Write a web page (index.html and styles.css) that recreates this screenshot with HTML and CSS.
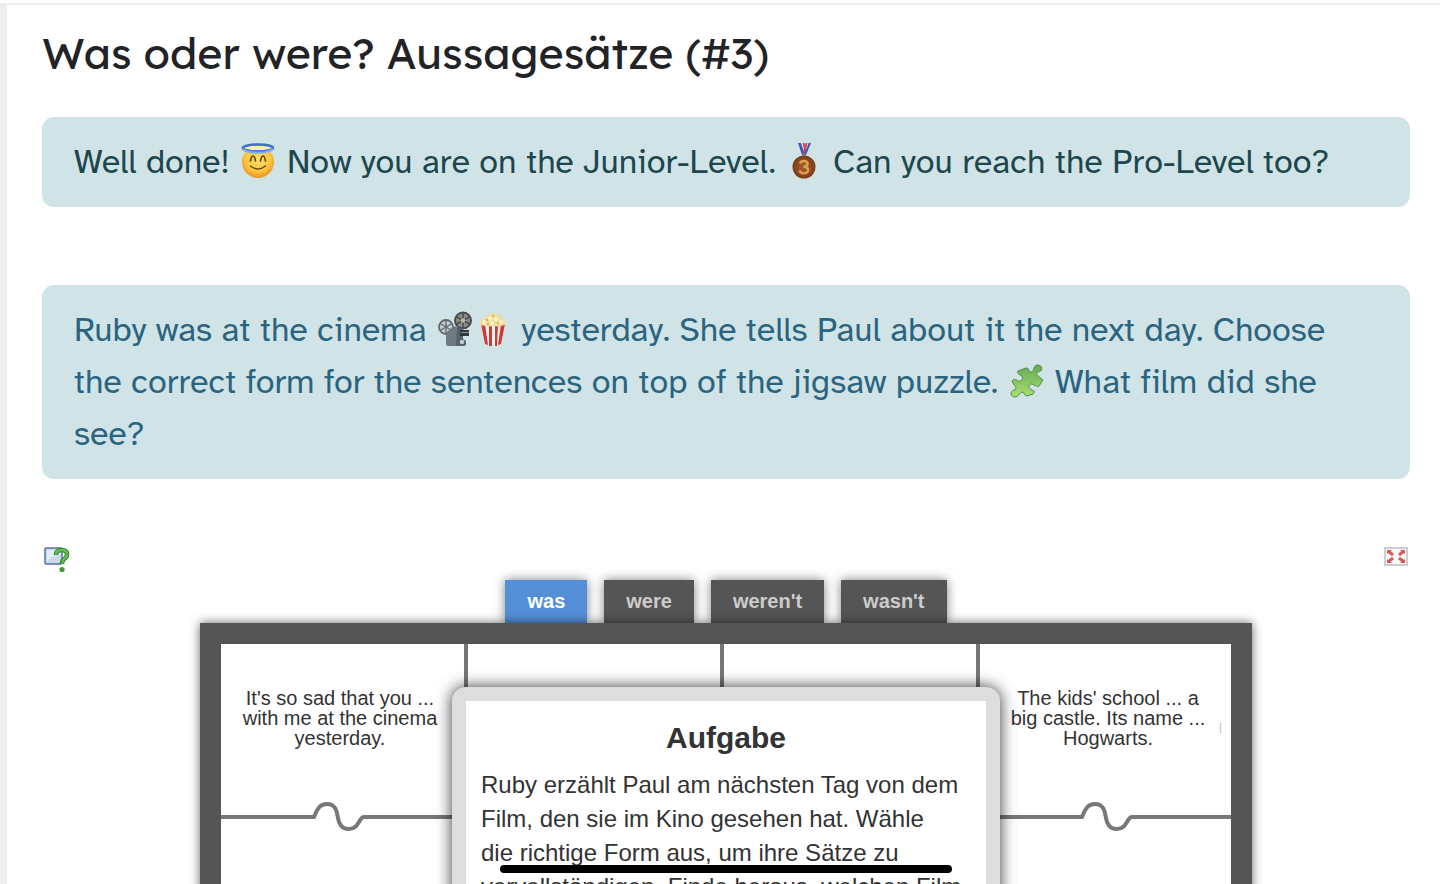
FILE: index.html
```
<!DOCTYPE html>
<html lang="de">
<head>
  <meta charset="UTF-8">
  <meta name="viewport" content="width=device-width, initial-scale=1.0">
  <title>Was oder were? Aussagesätze (#3)</title>
  <link rel="stylesheet" href="styles.css">
</head>
<body>

  <main class="page">
    <h1 class="page-title">Was oder were? Aussagesätze (#3)</h1>

    <section class="notice success" lang="en">
      Well done!
      <svg class="emoji" viewBox="0 0 34 36" role="img" aria-label="Angel">
        <defs>
          <radialGradient id="face" cx=".5" cy=".4" r=".6">
            <stop offset="0" stop-color="#ffe36a"/>
            <stop offset=".65" stop-color="#fdc63f"/>
            <stop offset="1" stop-color="#e89320"/>
          </radialGradient>
        </defs>
        <circle cx="17" cy="19" r="16" fill="url(#face)"/>
        <ellipse cx="17" cy="5" rx="15" ry="3.5" fill="#f6edb0" stroke="#3f6fd8" stroke-width="2.6"/>
        <path d="M2 6c5 5 25 5 30 0" fill="none" stroke="#78b4f0" stroke-width="2"/>
        <path d="M9.500 18q.8-5 2.500-5t2.500 5M19.500 18q.8-5 2.500-5t2.500 5" fill="none" stroke="#6b431a" stroke-width="1.700" stroke-linecap="round"/>
        <path d="M9.500 23q7.500 6 15 0" fill="none" stroke="#6b431a" stroke-width="1.500" stroke-linecap="round"/>
      </svg>
      Now you are on the Junior-Level.
      <svg class="emoji" viewBox="0 0 34 36" role="img" aria-label="Bronze medal">
        <defs>
          <radialGradient id="bronze">
            <stop offset="0" stop-color="#a9622d"/>
            <stop offset="1" stop-color="#7a3c17"/>
          </radialGradient>
        </defs>
        <path d="M11 0h13l-5 12h-4z" fill="#e9ecf6"/>
        <path d="M11 0h3l4 12h-3z" fill="#3c55b8"/>
        <path d="M15.500 0h2l1.500 8-1 2z" fill="#d0404a"/>
        <path d="M24 0h-2.500l-4.500 12h2z" fill="#3c55b8"/>
        <path d="M20.500 0h-2l-2.500 9 1.500 2z" fill="#d0404a"/>
        <circle cx="17" cy="13" r="1.800" fill="#b98a4c"/>
        <circle cx="17" cy="24" r="11.500" fill="url(#bronze)"/>
        <path d="M13 20.500q1-2.500 4-2.500c5 0 4.500 5.700-.5 5.700 6 0 6 6.600.5 6.600q-3.500 0-4.500-2.800" fill="none" stroke="#e29a50" stroke-width="2.600"/>
      </svg>
      Can you reach the Pro-Level too?
    </section>

    <section class="notice info" lang="en">
      Ruby was at the cinema
      <svg class="emoji" viewBox="0 0 34 36" role="img" aria-label="Film projector">
        <circle cx="8" cy="16" r="7" fill="#c3cdd0" stroke="#62696c" stroke-width="1.800"/>
        <path d="M8 9v14M2 12.500l12 7M14 12.500l-12 7" stroke="#62696c" stroke-width="1.300"/>
        <circle cx="25" cy="9.500" r="8" fill="#8b8d8c" stroke="#484a4b" stroke-width="2"/>
        <path d="M25 2v15M18.500 6l13 7M31.500 6l-13 7" stroke="#4d4f4f" stroke-width="1.600"/>
        <circle cx="25" cy="9.500" r="2.200" fill="#c0b79c"/>
        <path d="M8 24q0-3 3-5l4-3q2-1 5-1v18q0 2-2 2h-8q-2 0-2-2z" fill="#6d7983"/>
        <path d="M19 17h6v11l3 2v3q0 2-2 2h-8z" fill="#56616b"/>
        <path d="M22 19h9v6h-9z" fill="#30373d"/>
        <path d="M23 21h8v1h-8z" fill="#8e999f"/>
        <circle cx="24" cy="31" r="2.300" fill="#c3cace"/>
      </svg><svg class="emoji" viewBox="0 0 34 36" role="img" aria-label="Popcorn">
        <path d="M5 13h24l-4 20q-8 3-16 0z" fill="#f8f3ee"/>
        <path d="M5 13h4l3 21-3-1zM13 13h3v22h-3zM19 13h3l-1 22h-2zM25 13h4l-4 20-3 1z" fill="#cf3a36"/>
        <path d="M4 14q-1-5 4-6 1-5 6-4 4-5 8 0 4 0 4 4 5 2 3 6-12 3-25 0z" fill="#f1dda0"/>
        <g fill="#fff3c8"><circle cx="8" cy="11" r="2"/><circle cx="14" cy="7" r="2"/><circle cx="20" cy="8" r="2"/><circle cx="25" cy="11" r="2"/><circle cx="16" cy="12" r="2"/></g>
        <g fill="#cda850"><circle cx="11" cy="9" r="1"/><circle cx="17" cy="5" r="1"/><circle cx="22" cy="12" r="1"/><circle cx="12" cy="13" r="1"/></g>
      </svg>
      yesterday. She tells Paul about it the next day. Choose the correct form for the sentences on top of the jigsaw puzzle.
      <svg class="emoji" viewBox="0 0 34 36" role="img" aria-label="Puzzle piece">
        <defs>
          <linearGradient id="piece" x1="0" y1="0" x2="0" y2="1">
            <stop offset="0" stop-color="#62a958"/>
            <stop offset="1" stop-color="#abe06c"/>
          </linearGradient>
        </defs>
        <path d="M8 8L16 5C20 5 18 9 21 9C25 9 22 2 28 2C34 3 32 9 28 9C25 11 27 12 33 17L29 23C27 25 25 22 22 21C18 21 18 26 22 27C25 28 25 29 23 31L17 33C14 33 15 29 12 29C9 30 9 34 5 34C0 34 0 28 4 27C7 26 6 24 4 22L2 18C5 14 8 19 10 18C14 17 13 13 10 12C8 11 7 9 8 8Z" fill="url(#piece)" stroke="#568a48" stroke-width="1"/>
      </svg>
      What film did she see?
    </section>

    <div class="app">
      <div class="toolbar">
        <button class="icon-btn" type="button" aria-label="Aufgabe anzeigen">
          <svg viewBox="0 0 28 28">
            <rect x="3" y="3" width="17" height="16" rx="1" fill="#c9daef" stroke="#56719b" stroke-width="1.500"/>
            <path d="M5 5h13v5q-7 0-13 6z" fill="#e6eff8"/>
            <path d="M14 10q0-5 5.500-5t5.500 4.500q0 3-3 4.500-2 1.500-2 5" fill="none" stroke="#38852f" stroke-width="4.600"/>
            <path d="M14 9.500q0-4.500 5.500-4.500t5.500 4.500q0 3-3 4.500-2 1.500-2 4.500" fill="none" stroke="#62bd4c" stroke-width="2.600"/>
            <circle cx="20" cy="24.500" r="2.600" fill="#3f9938"/>
          </svg>
        </button>
        <button class="icon-btn" type="button" aria-label="Vollbild">
          <svg viewBox="0 0 28 28">
            <rect x="3" y="3" width="22" height="17" fill="#fafafa" stroke="#cdced2" stroke-width="2"/>
            <g fill="none" stroke="#d65a58" stroke-width="3"><path d="M6 6l5 4M22 6l-5 4M6 17l5-4M22 17l-5-4"/></g>
            <path d="M5 5h5l-5 4zM23 5h-5l5 4zM5 18h5l-5-4zM23 18h-5l5-4z" fill="#d65a58"/>
          </svg>
        </button>
      </div>

      <div class="tabs">
        <button class="tab active" type="button">was</button>
        <button class="tab" type="button">were</button>
        <button class="tab" type="button">weren't</button>
        <button class="tab" type="button">wasn't</button>
      </div>

      <div class="board">
        <!-- Outlines of the puzzle pieces -->
        <svg class="outlines" viewBox="0 0 1010 346" aria-hidden="true">
          <path d="M245 0V346M501 0V346M757 0V346M0 173H93C96 166 98 160 106 160C116 160 116 170 117 174C118 180 121 185 128 185C138 185 138 173 143 173H861C864 166 866 160 874 160C884 160 884 170 885 174C886 180 889 185 896 185C906 185 906 173 911 173H1010"/>
          <path class="faint" d="M1000 79q-2 5 0 10"/>
        </svg>
        <div class="pieces" lang="en">
          <p class="piece">It's so sad that you ... with me at the cinema yesterday.</p>
          <p class="piece"></p>
          <p class="piece"></p>
          <p class="piece">The kids' school ... a big castle. Its name ... Hogwarts.</p>
        </div>

        <div class="dialog" role="dialog" aria-labelledby="task-title">
          <h2 id="task-title">Aufgabe</h2>
          <p>Ruby erzählt Paul am nächsten Tag von dem Film, den sie im Kino gesehen hat. Wähle<br>die richtige Form aus, um ihre Sätze zu vervollständigen. Finde heraus, welchen Film</p>
        </div>
      </div>
    </div>
  </main>

  <div class="home-bar"></div>

</body>
</html>
```
FILE: styles.css
```
* {
  margin: 0;
  padding: 0;
  box-sizing: border-box;
}

body {
  height: 100vh;
  overflow: hidden;
  padding-top: 3px;
  background: #fff;
  font-family: "Liberation Sans", Arial, sans-serif;
}

.page {
  border-top: 2px solid #eee;
  border-left: 7px solid #eee;
  padding: 16px 30px 0 35px;
}

.page-title {
  margin-bottom: 32px;
  font-family: Lexend, Inter, sans-serif;
  font-size: 43px;
  font-weight: 400;
  line-height: 64px;
  color: #222326;
}

/* Text boxes */
.notice {
  padding: 19px 32px;
  border-radius: 12px;
  background: #d0e4e7;
  font-family: "Atkinson Hyperlegible", "Noto Sans", sans-serif;
  font-size: 34px;
  line-height: 52px;
}

.success {
  margin-bottom: 78px;
  color: #1d464d;
}

.info {
  color: #2b6480;
}

.emoji {
  width: 38px;
  height: 36px;
  vertical-align: -6px;
}

/* Puzzle app */
.app {
  margin-top: 66px;
}

.toolbar {
  display: flex;
  justify-content: space-between;
  height: 28px;
}

.icon-btn {
  width: 28px;
  height: 28px;
  border: 0;
  background: none;
  cursor: pointer;
}

.icon-btn svg {
  display: block;
  width: 100%;
}

.tabs {
  display: flex;
  justify-content: center;
  gap: 17px;
  margin-top: 7px;
}

.tab {
  height: 43px;
  padding: 0 22px;
  border: 0;
  background: #555;
  box-shadow: 0 0 10px rgba(0, 0, 0, 0.5);
  color: #ccc;
  font: bold 20px "Liberation Sans", Arial, sans-serif;
  cursor: pointer;
}

.tab.active {
  background: #558fd8;
  color: #fff;
}

.board {
  position: relative;
  max-width: 1052px;
  margin: 0 auto;
  border: 21px solid #555;
  background: #fff;
  box-shadow: 0 0 10px rgba(0, 0, 0, 0.6);
}

.outlines {
  display: block;
  width: 100%;
  fill: none;
  stroke: #777;
  stroke-width: 4;
}

.outlines .faint {
  stroke: #bbb;
  stroke-width: 1;
}

/* Pieces reach slightly under the frame on both sides */
.pieces {
  position: absolute;
  top: 0;
  left: -9px;
  right: -5px;
  display: grid;
  grid-template-columns: repeat(4, 1fr);
}

.piece {
  padding: 44px 28px;
  font-size: 20px;
  line-height: 20px;
  text-align: center;
  color: #333;
}

.dialog {
  position: absolute;
  top: 43px;
  left: 50%;
  width: 548px;
  transform: translateX(-50%);
  padding: 15px;
  border: 14px solid #ddd;
  border-radius: 14px;
  background: #fff;
  box-shadow: 0 0 16px rgba(0, 0, 0, 0.8);
  color: #333;
}

.dialog h2 {
  margin-bottom: 8px;
  font-size: 30px;
  line-height: 44px;
  text-align: center;
}

.dialog p {
  font-size: 24px;
  line-height: 34px;
}

.home-bar {
  position: fixed;
  right: 30px;
  bottom: 11px;
  left: 42px;
  max-width: 452px;
  height: 8px;
  margin: 0 auto;
  border-radius: 4px;
  background: #000;
}
```
